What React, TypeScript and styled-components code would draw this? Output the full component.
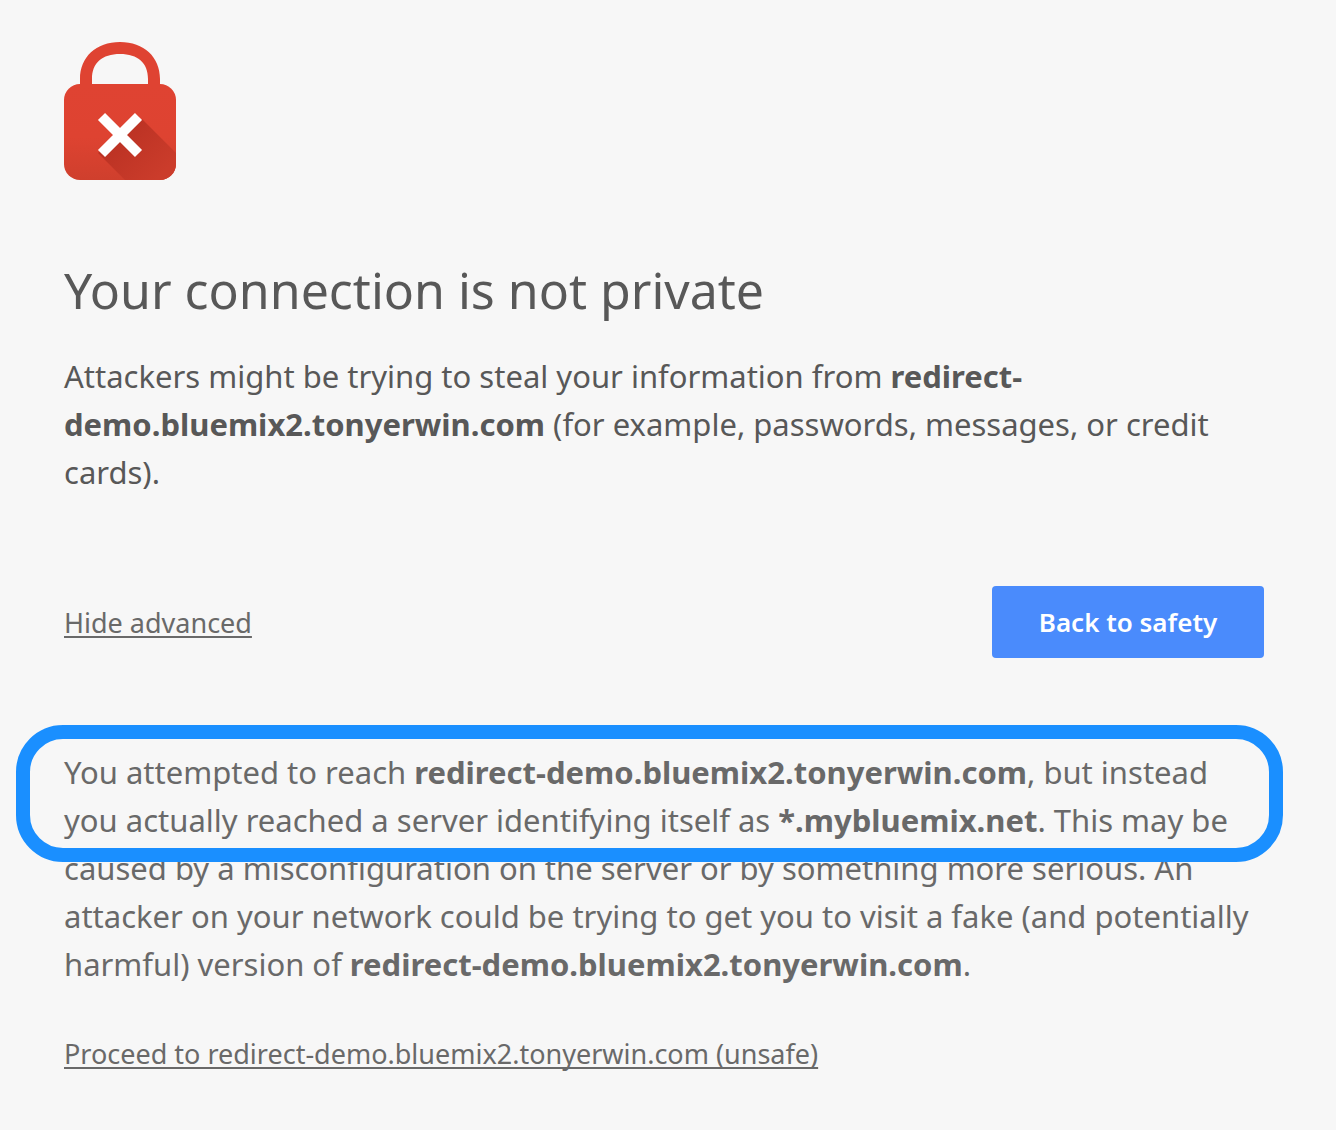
import React, { useState } from "react";
import styled, { createGlobalStyle, css } from "styled-components";

const GlobalStyle = createGlobalStyle`
  * { box-sizing: border-box; }
  body {
    margin: 0;
    background: #f7f7f7;
    color: #696969;
    font-family: "Lucida Grande", "Noto Sans", "Open Sans", sans-serif;
    font-size: 31px;
    line-height: 48px;
  }
`;

const Page = styled.main`
  padding: 42px 72px 50px 64px;
`;

const LockIcon = styled.svg`
  display: block;
  width: 112px;
  height: 138px;
`;

const Title = styled.h1`
  margin: 79px 0 31px;
  color: #585858;
  font-size: 50px;
  font-weight: 400;
  line-height: 62px;
`;

const Paragraph = styled.p<{ $strong?: boolean }>`
  margin: 0;
  color: ${(p) => (p.$strong ? "#585858" : "#696969")};
`;

const Actions = styled.div`
  display: flex;
  justify-content: space-between;
  align-items: center;
  margin-top: 90px;
`;

const underlined = css`
  color: #696969;
  font-size: 27px;
  text-decoration: underline;
  text-decoration-thickness: 2px;
  text-decoration-skip-ink: none;
  text-underline-offset: 3px;
`;

const TextButton = styled.button`
  padding: 2px 0 0;
  border: 0;
  background: none;
  font: inherit;
  cursor: pointer;
  ${underlined}
`;

const PrimaryButton = styled.button`
  width: 272px;
  height: 72px;
  padding: 0;
  border: 0;
  border-radius: 4px;
  background: #4a8bfc;
  color: #fff;
  font: inherit;
  font-size: 26px;
  font-weight: 600;
  cursor: pointer;
`;

const Details = styled.section`
  position: relative;
  margin-top: 90px;
`;

const Highlight = styled.div`
  position: absolute;
  top: -23px;
  left: -48px;
  right: -19px;
  height: 137px;
  border: 14px solid #1a8fff;
  border-radius: 47px;
  pointer-events: none;
`;

const ProceedLink = styled.a`
  display: inline-block;
  margin-top: 42px;
  ${underlined}
`;

function Lock() {
  return (
    <LockIcon viewBox="0 0 112 138" aria-hidden="true">
      <defs>
        <linearGradient id="body" x1="0" y1="42" x2="0" y2="138" gradientUnits="userSpaceOnUse">
          <stop offset="0" stopColor="#df4332" />
          <stop offset="0.55" stopColor="#de4331" />
          <stop offset="1" stopColor="#cf3f2d" />
        </linearGradient>
        <linearGradient id="shade" x1="45" y1="85" x2="95" y2="135" gradientUnits="userSpaceOnUse">
          <stop offset="0" stopColor="#b83022" />
          <stop offset="1" stopColor="#cb3c2b" />
        </linearGradient>
        <clipPath id="clip">
          <rect y="42" width="112" height="96" rx="16" />
        </clipPath>
      </defs>
      <path d="M16 43V37C16 15 32 0 56 0S96 15 96 37V43H84V37C84 21 74 12 56 12S28 21 28 37V43Z" fill="#df4332" />
      <rect y="42" width="112" height="96" rx="16" fill="url(#body)" />
      <path d="M34 111L78 77L112 111V138H61Z" fill="url(#shade)" clipPath="url(#clip)" />
      <path d="M37.500 74.500L74.500 111.500M74.500 74.500L37.500 111.500" stroke="#fff" strokeWidth="10" />
    </LockIcon>
  );
}

export default function App() {
  const [open, setOpen] = useState(true);
  return (
    <>
      <GlobalStyle />
      <Page>
        <Lock />
        <Title>Your connection is not private</Title>
        <Paragraph $strong>
          Attackers might be trying to steal your information from{" "}
          <strong>redirect-demo.bluemix2.tonyerwin.com</strong> (for example, passwords, messages, or credit cards).
        </Paragraph>
        <Actions>
          <TextButton type="button" onClick={() => setOpen(!open)}>
            {open ? "Hide advanced" : "Advanced"}
          </TextButton>
          <PrimaryButton type="button">Back to safety</PrimaryButton>
        </Actions>
        {open && (
          <Details>
            <Paragraph>
              You attempted to reach <strong>redirect-demo.bluemix2.tonyerwin.com</strong>, but instead you actually
              reached a server identifying itself as <strong>*.mybluemix.net</strong>. This may be caused by a
              misconfiguration on the server or by something more serious. An attacker on your network could be trying
              to get you to visit a fake (and potentially harmful) version of{" "}
              <strong>redirect-demo.bluemix2.tonyerwin.com</strong>.
            </Paragraph>
            <Highlight />
            <ProceedLink href="#proceed">Proceed to redirect-demo.bluemix2.tonyerwin.com (unsafe)</ProceedLink>
          </Details>
        )}
      </Page>
    </>
  );
}
